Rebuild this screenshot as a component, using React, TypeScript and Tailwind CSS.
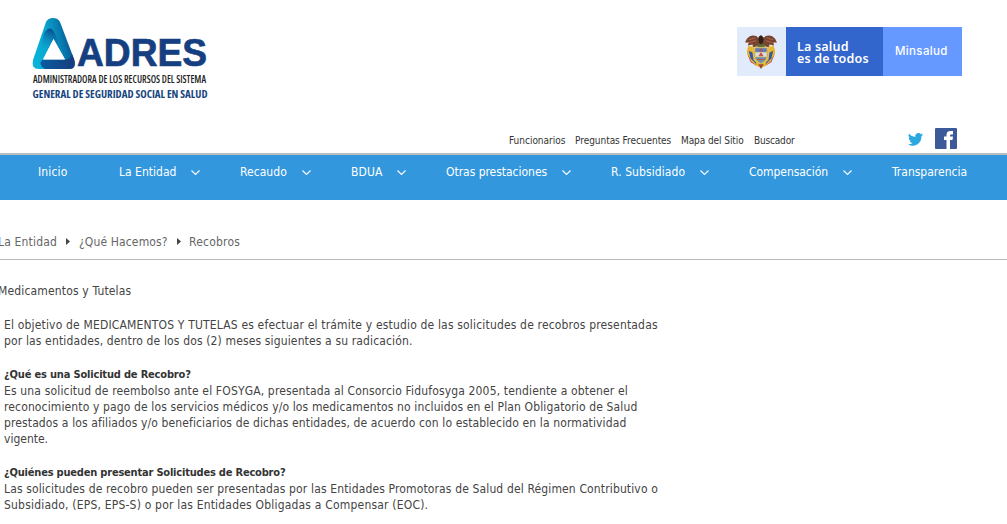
const navItems = [
  { label: 'Inicio', cell: 'w-[81px]', text: 'w-[30px] tracking-[0.15px]', menu: false },
  { label: 'La Entidad', cell: 'w-[121px]', text: 'w-[57px] tracking-[0.02px]', menu: true },
  { label: 'Recaudo', cell: 'w-[111px]', text: 'w-[47px] tracking-[0.05px]', menu: true },
  { label: 'BDUA', cell: 'w-[95px]', text: 'w-[31px] tracking-[0.1px]', menu: true },
  { label: 'Otras prestaciones', cell: 'w-[165px]', text: 'w-[101px] tracking-[-0.03px]', menu: true },
  { label: 'R. Subsidiado', cell: 'w-[138px]', text: 'w-[74px] tracking-[0.08px]', menu: true },
  { label: 'Compensación', cell: 'w-[143px]', text: 'w-[79px] tracking-[-0.05px]', menu: true },
  { label: 'Transparencia', cell: 'w-[115px]', text: 'w-[76px] tracking-[0px]', menu: false },
];

const quickLinks = [
  { label: 'Funcionarios', cell: 'w-[66px] tracking-[-0.02px]' },
  { label: 'Preguntas Frecuentes', cell: 'w-[106px] tracking-[-0.04px]' },
  { label: 'Mapa del Sitio', cell: 'w-[73px] tracking-[-0.08px]' },
  { label: 'Buscador', cell: 'w-[50px] tracking-[-0.18px]' },
];

function AdresLogo() {
  return (
    <svg className="block h-[84px] w-[180px]" viewBox="0 0 180 84" role="img" aria-label="ADRES">
      <defs>
        <linearGradient id="outer" gradientUnits="userSpaceOnUse" x1="3" y1="40" x2="42" y2="32">
          <stop offset="0" stopColor="#08b4d8" />
          <stop offset="0.45" stopColor="#0ba6cf" />
          <stop offset="0.8" stopColor="#0779ad" />
          <stop offset="1" stopColor="#0b5693" />
        </linearGradient>
        <linearGradient id="inner" gradientUnits="userSpaceOnUse" x1="12" y1="34" x2="20" y2="12">
          <stop offset="0" stopColor="#0ba3ce" stopOpacity="0" />
          <stop offset="1" stopColor="#0b4e92" />
        </linearGradient>
        <linearGradient id="base" gradientUnits="userSpaceOnUse" x1="10" y1="0" x2="46" y2="0">
          <stop offset="0" stopColor="#0a5ba0" />
          <stop offset="1" stopColor="#163c7d" />
        </linearGradient>
      </defs>
      <path fillRule="evenodd" d="M16 5Q18 1 23 1Q28 1 30 5L44 42Q47 52 39 52H9Q1 52 3 43ZM23.5 22L13 42.5H35Z" fill="url(#outer)" />
      <path d="M14 17Q16 12 20 11.5Q23 12 25 17L35 42.5L23.5 22L16 37L10 33Z" fill="url(#inner)" />
      <path d="M13 42.5H35Q41 42.5 42 37L44 42Q47 52 39 52H15Q7 47 13 42.5Z" fill="url(#base)" />
      <path d="M23.5 22L13 42.5H35Z" fill="#fff" />
      <text x="47" y="49.2" textLength="130" lengthAdjust="spacingAndGlyphs" stroke="#153f80" strokeWidth=".7" className="fill-[#153f80] font-['Liberation_Sans'] text-[38.5px] font-bold">ADRES</text>
      <text x="3" y="65.5" textLength="173" lengthAdjust="spacingAndGlyphs" className="fill-[#222] font-['Open_Sans'] text-[10.5px] font-semibold">ADMINISTRADORA DE LOS RECURSOS DEL SISTEMA</text>
      <text x="2.5" y="80.5" textLength="175" lengthAdjust="spacingAndGlyphs" className="fill-[#174681] font-['Open_Sans'] text-[11px] font-bold">GENERAL DE SEGURIDAD SOCIAL EN SALUD</text>
    </svg>
  );
}

function CoatOfArms() {
  return (
    <svg className="block h-[35px] w-[32px]" viewBox="0 0 34 37" aria-hidden="true">
      <path d="M4 12Q0 18 4 25L11 33L17 36L23 33L30 25Q34 18 30 12L24 15H10Z" fill="#e8b52d" />
      <path d="M4 18L6 26L12 32L10 20ZM30 18L28 26L22 32L24 20Z" fill="#36599b" />
      <path d="M2 20L7 29L13 34L6 30ZM32 20L27 29L21 34L28 30Z" fill="#c3483b" />
      <path d="M8 12L10 27L15 32M26 12L24 27L19 32" fill="none" stroke="#e4bd4c" strokeWidth="2" />
      <path d="M15 5L12 2Q6 0 2 5L0 9L4 9L3 12L8 11L9 14L13 13L17 14L21 13L25 14L26 11L31 12L30 9L34 9L32 5Q28 0 22 2L19 5Q18 1 15 2Z" fill="#79432f" />
      <path d="M14 4L17 1L20 4L19 9L17 11L15 9Z" fill="#302016" />
      <path d="M4 6L11 4M4 9L12 7M30 6L23 4M29 9L22 7" stroke="#aa6b50" strokeWidth="1" />
      <path d="M11 11H23L20 14H14Z" fill="#5b7135" />
      <path d="M10 14H24V24Q23 29 17 32Q11 29 10 24Z" fill="#d8b547" />
      <path d="M11 15H23V19H11Z" fill="#5d7cbf" />
      <path d="M11 19.5H23V24H11Z" fill="#d7dce2" />
      <path d="M11 24.5H23Q22 28 17 31Q12 28 11 24.5Z" fill="#6991b0" />
      <path d="M15 17H19M17 15V19M13 27H21M17 20L15 23H19Z" fill="#bd4936" stroke="#c74e38" strokeWidth="1" />
      <path d="M14 32L17 37L20 32Z" fill="#9b4837" />
    </svg>
  );
}

function Chevron() {
  return (
    <svg className="ml-[15px] mt-[1px] h-[7px] w-[9px] shrink-0" viewBox="0 0 9 7" fill="none" stroke="#fff" strokeWidth="1.1" aria-hidden="true">
      <path d="M.5 1.5L4.5 5.5L8.5 1.5" />
    </svg>
  );
}

function CrumbArrow() {
  return (
    <svg className="h-[7px] w-1 shrink-0" viewBox="0 0 4 7" aria-hidden="true">
      <path d="M0 0L4 3.5L0 7Z" fill="#444" />
    </svg>
  );
}

export default function App() {
  return (
    <div className="h-[524px] w-[1007px] overflow-hidden bg-white font-['DejaVu_Sans_Condensed','DejaVu_Sans',sans-serif] text-[12px] text-[#444] [font-stretch:condensed]">
      <header className="flex h-[153px] flex-col">
        <div className="flex h-[128px] items-start justify-between pl-[30px] pr-[45px]">
          <div className="pt-[17px]"><AdresLogo /></div>
          <div className="mt-[27px] flex h-[49px] w-[225px] text-white">
            <div className="flex w-[49px] items-center justify-center bg-[#e2ebfb] pr-px"><CoatOfArms /></div>
            <div className="flex w-[97px] flex-col justify-center bg-[#3366cc] pl-[11px] pt-[2px] font-['Noto_Sans'] text-[12.5px] font-semibold leading-[12px] tracking-[0.2px] [font-stretch:normal]">
              <span>La salud</span>
              <span className="whitespace-nowrap">es de todos</span>
            </div>
            <div className="flex w-[79px] items-center bg-[#6699ff] pl-3 font-['Inter'] text-[11.5px] font-medium tracking-[0.35px] [font-stretch:normal]">Minsalud</div>
          </div>
        </div>
        <div className="flex h-[25px] pl-[509px]">
          <nav className="flex pt-[5px] text-[10px] leading-4 text-[#333]">
            {quickLinks.map((link) => (
              <a key={link.label} className={`${link.cell} whitespace-nowrap`}>{link.label}</a>
            ))}
          </nav>
          <div className="ml-[104px] flex gap-3">
            <svg className="mt-[5px] h-[13px] w-[15px]" viewBox="0 0 24 20" preserveAspectRatio="none" fill="#2aa9e0" aria-label="Twitter">
              <path d="M24 2.4a10 10 0 0 1-2.8.8A4.9 4.9 0 0 0 23.3.5a10 10 0 0 1-3.1 1.2 4.9 4.9 0 0 0-8.4 4.5A14 14 0 0 1 1.7 1.1a4.9 4.9 0 0 0 1.5 6.5A4.9 4.9 0 0 1 1 7a4.9 4.9 0 0 0 3.9 4.8 5 5 0 0 1-2.2.1 4.9 4.9 0 0 0 4.6 3.4A10 10 0 0 1 0 17.3 14 14 0 0 0 21.5 4.9 10 10 0 0 0 24 2.4Z" />
            </svg>
            <svg className="h-[21px] w-[22px]" viewBox="0 0 22 21" aria-label="Facebook">
              <rect width="22" height="21" rx="1" fill="#3c5a99" />
              <path d="M11.5 21V12H9V8.5H11.5V7Q11.5 3 15.5 3H18V6.5H16.5Q15 6.5 15 7.5V8.5H18L17.5 12H15V21Z" fill="#fff" />
            </svg>
          </div>
        </div>
      </header>

      <nav className="flex h-[47px] border-t-2 border-[#bdbdbd] bg-[#3397dd] pl-[38px] pt-[9px] text-white">
        {navItems.map((item) => (
          <a key={item.label} className={`${item.cell} flex h-4 shrink-0 items-center whitespace-nowrap leading-4`}>
            <span className={item.text}>{item.label}</span>
            {item.menu && <Chevron />}
          </a>
        ))}
      </nav>

      <div className="flex h-[60px] items-center border-b border-[#bbb] pt-6 text-[#666]">
        <span className="-ml-[2px] w-[68px] whitespace-nowrap tracking-[0.18px]">La Entidad</span>
        <CrumbArrow />
        <span className="ml-[9px] w-[98px] whitespace-nowrap tracking-[0.13px]">¿Qué Hacemos?</span>
        <CrumbArrow />
        <span className="ml-2 whitespace-nowrap tracking-[0.22px]">Recobros</span>
      </div>

      <main className="pt-[23px] leading-4">
        <h1 className="-ml-[2px] whitespace-nowrap tracking-[0.16px]">Medicamentos y Tutelas</h1>
        <section className="ml-1 mt-[18px] whitespace-nowrap">
          <p>
            <span className="block w-fit tracking-[0.17px]">El objetivo de MEDICAMENTOS Y TUTELAS es efectuar el trámite y estudio de las solicitudes de recobros presentadas</span>
            <span className="block w-fit tracking-[0.14px]">por las entidades, dentro de los dos (2) meses siguientes a su radicación.</span>
          </p>
          <h2 className="mt-[18px] w-fit text-[11px] font-bold tracking-[-0.18px] text-[#333]">¿Qué es una Solicitud de Recobro?</h2>
          <p>
            <span className="block w-fit tracking-[0.155px]">Es una solicitud de reembolso ante el FOSYGA, presentada al Consorcio Fidufosyga 2005, tendiente a obtener el</span>
            <span className="block w-fit tracking-[0.13px]">reconocimiento y pago de los servicios médicos y/o los medicamentos no incluidos en el Plan Obligatorio de Salud</span>
            <span className="block w-fit tracking-[0.12px]">prestados a los afiliados y/o beneficiarios de dichas entidades, de acuerdo con lo establecido en la normatividad</span>
            <span className="block w-fit">vigente.</span>
          </p>
          <h2 className="mt-[18px] w-fit text-[11px] font-bold tracking-[-0.2px] text-[#333]">¿Quiénes pueden presentar Solicitudes de Recobro?</h2>
          <p>
            <span className="block w-fit tracking-[0.138px]">Las solicitudes de recobro pueden ser presentadas por las Entidades Promotoras de Salud del Régimen Contributivo o</span>
            <span className="block w-fit tracking-[0.195px]">Subsidiado, (EPS, EPS-S) o por las Entidades Obligadas a Compensar (EOC).</span>
          </p>
        </section>
      </main>
    </div>
  );
}
